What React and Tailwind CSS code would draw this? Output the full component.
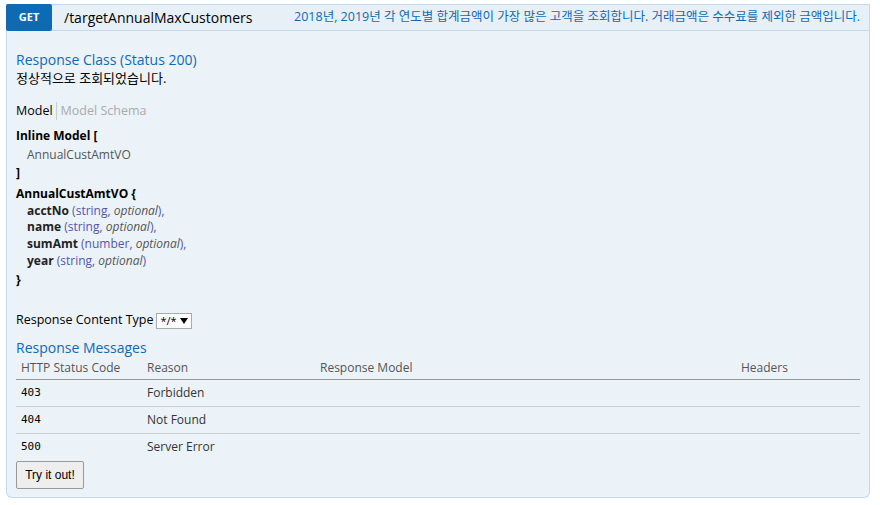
export default function App() {
  const fields = [
    { name: "acctNo", type: "string" },
    { name: "name", type: "string" },
    { name: "sumAmt", type: "number" },
    { name: "year", type: "string", last: true },
  ];
  const messages = [
    { code: "403", reason: "Forbidden" },
    { code: "404", reason: "Not Found" },
    { code: "500", reason: "Server Error" },
  ];

  return (
    <div
      className="min-h-screen bg-white px-[6px] pt-[4px] text-[#000]"
      style={{ fontFamily: '"Open Sans", "Noto Sans CJK KR", sans-serif' }}
    >
      <div className="w-[864px]">
        {/* heading */}
        <div className="flex h-[27px] items-center border border-[#c3d9ec] bg-[#e7f0f7]">
          <span className="-ml-px -mt-px flex h-[27px] w-[46px] items-center justify-center rounded-[2px] bg-[#0f6ab4] text-[11px] font-bold text-white">
            GET
          </span>
          <span className="ml-[12px] text-[14px] text-[#000]">/targetAnnualMaxCustomers</span>
          <span className="ml-auto pr-[9px] text-[12.5px] text-[#0f6ab4]">
            2018년, 2019년 각 연도별 합계금액이 가장 많은 고객을 조회합니다. 거래금액은 수수료를 제외한 금액입니다.
          </span>
        </div>

        {/* content */}
        <div className="rounded-b-[6px] border border-t-0 border-[#c3d9ec] bg-[#ebf3f9] px-[9px] pb-[8px] pt-[19px]">
          <h4 className="text-[14px] leading-[19px] text-[#0f6ab4]">Response Class (Status 200)</h4>
          <p className="text-[13px] leading-[19px]">정상적으로 조회되었습니다.</p>

          <div className="mt-[14px] flex items-center text-[12.5px] leading-[18px]">
            <span className="pr-[3px] text-[#000]">Model</span>
            <span className="border-l border-[#ccc] pl-[4px] text-[#aaa]">Model Schema</span>
          </div>

          <div className="mt-[7px] text-[12px]">
            <div className="font-bold leading-[18.5px]">Inline Model [</div>
            <div className="pl-[11px] leading-[18.5px] text-[#555]">AnnualCustAmtVO</div>
            <div className="font-bold leading-[18.5px]">]</div>
            <div className="mt-[2px] font-bold leading-[18px]">AnnualCustAmtVO {"{"}</div>
            {fields.map((f) => (
              <div key={f.name} className="pl-[11px] leading-[16.7px]">
                <span className="font-bold text-[#222]">{f.name}</span>{" "}
                <span className="text-[#55a]">
                  ({f.type}, <span className="italic text-[#555]">optional</span>){f.last ? "" : ","}
                </span>
              </div>
            ))}
            <div className="mt-[2px] font-bold leading-[18px]">{"}"}</div>
          </div>

          <div className="mt-[22px] flex items-center text-[12.5px]">
            <span>Response Content Type</span>
            <span className="ml-[3px] flex h-[16px] w-[36px] items-center justify-between border border-[#aaa] bg-white px-[3px] text-[11px] leading-none">
              */*
              <svg width="8" height="6" viewBox="0 0 8 6">
                <path d="M0 0h8L4 6z" fill="#000" />
              </svg>
            </span>
          </div>

          <h4 className="mt-[8px] text-[14px] leading-[19px] text-[#0f6ab4]">Response Messages</h4>
          <table className="mt-[2px] w-[844px] text-left text-[12px]">
            <thead>
              <tr className="border-b border-[#999] text-[#555]">
                <th className="w-[126px] px-[5px] pb-[2px] font-normal">HTTP Status Code</th>
                <th className="w-[173px] px-[5px] pb-[2px] font-normal">Reason</th>
                <th className="px-[5px] pb-[2px] font-normal">Response Model</th>
                <th className="w-[124px] px-[5px] pb-[2px] font-normal">Headers</th>
              </tr>
            </thead>
            <tbody>
              {messages.map((m, i) => (
                <tr key={m.code} className={i < 2 ? "border-b border-[#ccc]" : ""}>
                  <td
                    className="h-[27px] px-[5px] text-[11px]"
                    style={{ fontFamily: '"DejaVu Sans Mono", monospace' }}
                  >
                    {m.code}
                  </td>
                  <td className="h-[27px] px-[5px] text-[#333]">{m.reason}</td>
                  <td className="px-[5px]"></td>
                  <td className="px-[5px]"></td>
                </tr>
              ))}
            </tbody>
          </table>

          <button
            className="-mt-[1px] h-[28px] w-[68px] rounded-[2px] border border-[#999] bg-[#eee] text-[12px] text-[#000]"
            style={{ fontFamily: '"Liberation Sans", Arial, sans-serif' }}
          >
            Try it out!
          </button>
        </div>
      </div>
    </div>
  );
}
